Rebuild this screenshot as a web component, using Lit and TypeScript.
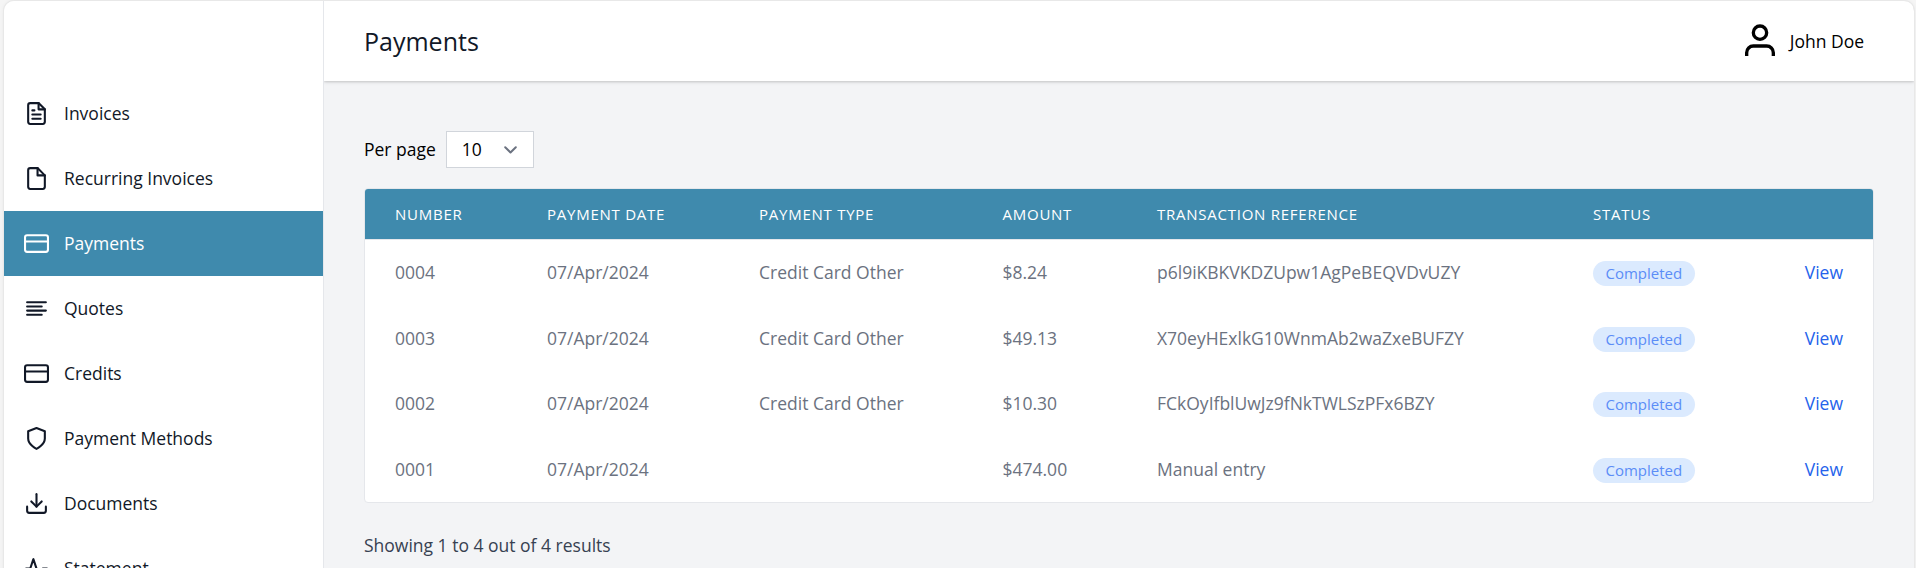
import { LitElement, html, css, svg } from "lit";
import { customElement } from "lit/decorators.js";
import { classMap } from "lit/directives/class-map.js";

const icons = {
  fileText: svg`<path d="M14 2H6a2 2 0 0 0-2 2v16a2 2 0 0 0 2 2h12a2 2 0 0 0 2-2V8z"/><polyline points="14 2 14 8 20 8"/><line x1="16" y1="13" x2="8" y2="13"/><line x1="16" y1="17" x2="8" y2="17"/><polyline points="10 9 9 9 8 9"/>`,
  file: svg`<path d="M13 2H6a2 2 0 0 0-2 2v16a2 2 0 0 0 2 2h12a2 2 0 0 0 2-2V9z"/><polyline points="13 2 13 9 20 9"/>`,
  card: svg`<rect x="1" y="4" width="22" height="16" rx="2" ry="2"/><line x1="1" y1="10" x2="23" y2="10"/>`,
  align: svg`<line x1="17" y1="10" x2="3" y2="10"/><line x1="21" y1="6" x2="3" y2="6"/><line x1="21" y1="14" x2="3" y2="14"/><line x1="17" y1="18" x2="3" y2="18"/>`,
  shield: svg`<path d="M12 22s8-4 8-10V5l-8-3-8 3v7c0 6 8 10 8 10z"/>`,
  download: svg`<path d="M21 15v4a2 2 0 0 1-2 2H5a2 2 0 0 1-2-2v-4"/><polyline points="7 10 12 15 17 10"/><line x1="12" y1="15" x2="12" y2="3"/>`,
  activity: svg`<polyline points="22 12 18 12 15 21 9 3 6 12 2 12"/>`,
};

const nav = [
  { label: "Invoices", icon: icons.fileText },
  { label: "Recurring Invoices", icon: icons.file },
  { label: "Payments", icon: icons.card, active: true },
  { label: "Quotes", icon: icons.align },
  { label: "Credits", icon: icons.card },
  { label: "Payment Methods", icon: icons.shield },
  { label: "Documents", icon: icons.download },
  { label: "Statement", icon: icons.activity },
];

const columns = ["Number", "Payment Date", "Payment Type", "Amount", "Transaction Reference", "Status", ""];

const payments = [
  ["0004", "07/Apr/2024", "Credit Card Other", "$8.24", "p6l9iKBKVKDZUpw1AgPeBEQVDvUZY"],
  ["0003", "07/Apr/2024", "Credit Card Other", "$49.13", "X70eyHExlkG10WnmAb2waZxeBUFZY"],
  ["0002", "07/Apr/2024", "Credit Card Other", "$10.30", "FCkOyIfblUwJz9fNkTWLSzPFx6BZY"],
  ["0001", "07/Apr/2024", "", "$474.00", "Manual entry"],
];

@customElement("app-root")
export class AppRoot extends LitElement {
  static styles = css`
    * { box-sizing: border-box; }
    :host {
      display: block;
      height: 568px;
      overflow: hidden;
      padding: 1px 2px 0 4px;
      background: #f5f5f5;
      font-family: "Open Sans", "Noto Sans", sans-serif;
      font-size: 17.5px;
      line-height: 25px;
      color: #000;
    }
    .window {
      display: flex;
      height: 620px;
      overflow: hidden;
      border-radius: 10px;
      background: #f3f4f6;
      box-shadow: 0 0 0 1px #e8e8e8, 0 0 4px rgba(0, 0, 0, 0.08);
    }
    .sidebar {
      flex: none;
      width: 320px;
      padding-top: 80px;
      background: #fff;
      border-right: 1px solid #e5e7eb;
    }
    .item {
      display: flex;
      align-items: center;
      gap: 15px;
      height: 65px;
      padding-left: 20px;
      color: #111827;
    }
    .item.active { background: #3f8aad; color: #fff; }
    .icon {
      flex: none;
      width: 25px;
      height: 25px;
      fill: none;
      stroke: currentColor;
      stroke-width: 2;
      stroke-linecap: round;
      stroke-linejoin: round;
    }
    .main { flex: 1; min-width: 0; overflow: hidden; }
    .topbar {
      display: flex;
      align-items: center;
      justify-content: space-between;
      height: 80px;
      padding: 0 50px 0 40px;
      background: #fff;
      box-shadow: 0 1px 4px rgba(0, 0, 0, 0.12), 0 1px 2px rgba(0, 0, 0, 0.1);
    }
    .title { margin: 0; font-size: 25px; font-weight: 400; line-height: 35px; color: #111827; }
    .user { display: flex; align-items: center; gap: 10px; }
    .avatar { width: 40px; height: 40px; fill: none; stroke: #000; stroke-width: 2; }
    .content { padding: 50px 40px 0; }
    .perpage { display: flex; align-items: center; gap: 10px; height: 37px; }
    .select {
      display: flex;
      align-items: center;
      justify-content: space-between;
      width: 88px;
      height: 37px;
      padding: 0 16px 0 15px;
      background: #fff;
      border: 1px solid #d1d5db;
    }
    .chevron {
      width: 13px;
      height: 8px;
      fill: none;
      stroke: #6b7280;
      stroke-width: 2;
      stroke-linecap: round;
      stroke-linejoin: round;
    }
    .table {
      height: 315px;
      margin-top: 20px;
      overflow: hidden;
      border: 1px solid #e5e7eb;
      border-radius: 4px;
      background: #fff;
    }
    .row {
      display: grid;
      grid-template-columns: 152px 212px 243.5px 154.5px 436px 1fr auto;
      align-items: center;
      height: 65.5px;
      padding: 0 30px;
      color: #6b7280;
    }
    .row.head {
      height: 51px;
      padding-bottom: 1px;
      font-size: 15px;
      line-height: 20px;
      letter-spacing: 0.75px;
      text-transform: uppercase;
      background: #3f8aad;
      border-bottom: 1px solid #e5e7eb;
      color: #fff;
    }
    .pill {
      justify-self: start;
      height: 25px;
      margin-top: 2px;
      padding: 0 12.5px;
      border-radius: 13px;
      background: #dbeafe;
      font-size: 15px;
      line-height: 25px;
      color: #5b8df7;
    }
    .view { color: #2563eb; }
    .summary { margin-top: 30px; color: #374151; }
  `;

  render() {
    return html`
      <div class="window">
        <nav class="sidebar">
          ${nav.map(
            (n) => html`<div class=${classMap({ item: true, active: !!n.active })}>
              <svg class="icon" viewBox="0 0 24 24">${n.icon}</svg>
              <span>${n.label}</span>
            </div>`
          )}
        </nav>
        <div class="main">
          <header class="topbar">
            <h1 class="title">Payments</h1>
            <div class="user">
              <svg class="avatar" viewBox="0 0 24 24">
                <path d="M20 21v-2a4 4 0 0 0-4-4H8a4 4 0 0 0-4 4v2" />
                <circle cx="12" cy="7" r="4" />
              </svg>
              <span>John Doe</span>
            </div>
          </header>
          <div class="content">
            <div class="perpage">
              <span>Per page</span>
              <div class="select">
                <span>10</span>
                <svg class="chevron" viewBox="0 0 13 8"><path d="M1.2 1.2l5.3 5.3 5.3-5.3" /></svg>
              </div>
            </div>
            <div class="table">
              <div class="row head">${columns.map((c) => html`<span>${c}</span>`)}</div>
              ${payments.map(
                (p) => html`<div class="row">
                  ${p.map((v) => html`<span>${v}</span>`)}
                  <span class="pill">Completed</span>
                  <span class="view">View</span>
                </div>`
              )}
            </div>
            <div class="summary">Showing 1 to 4 out of 4 results</div>
          </div>
        </div>
      </div>
    `;
  }
}
